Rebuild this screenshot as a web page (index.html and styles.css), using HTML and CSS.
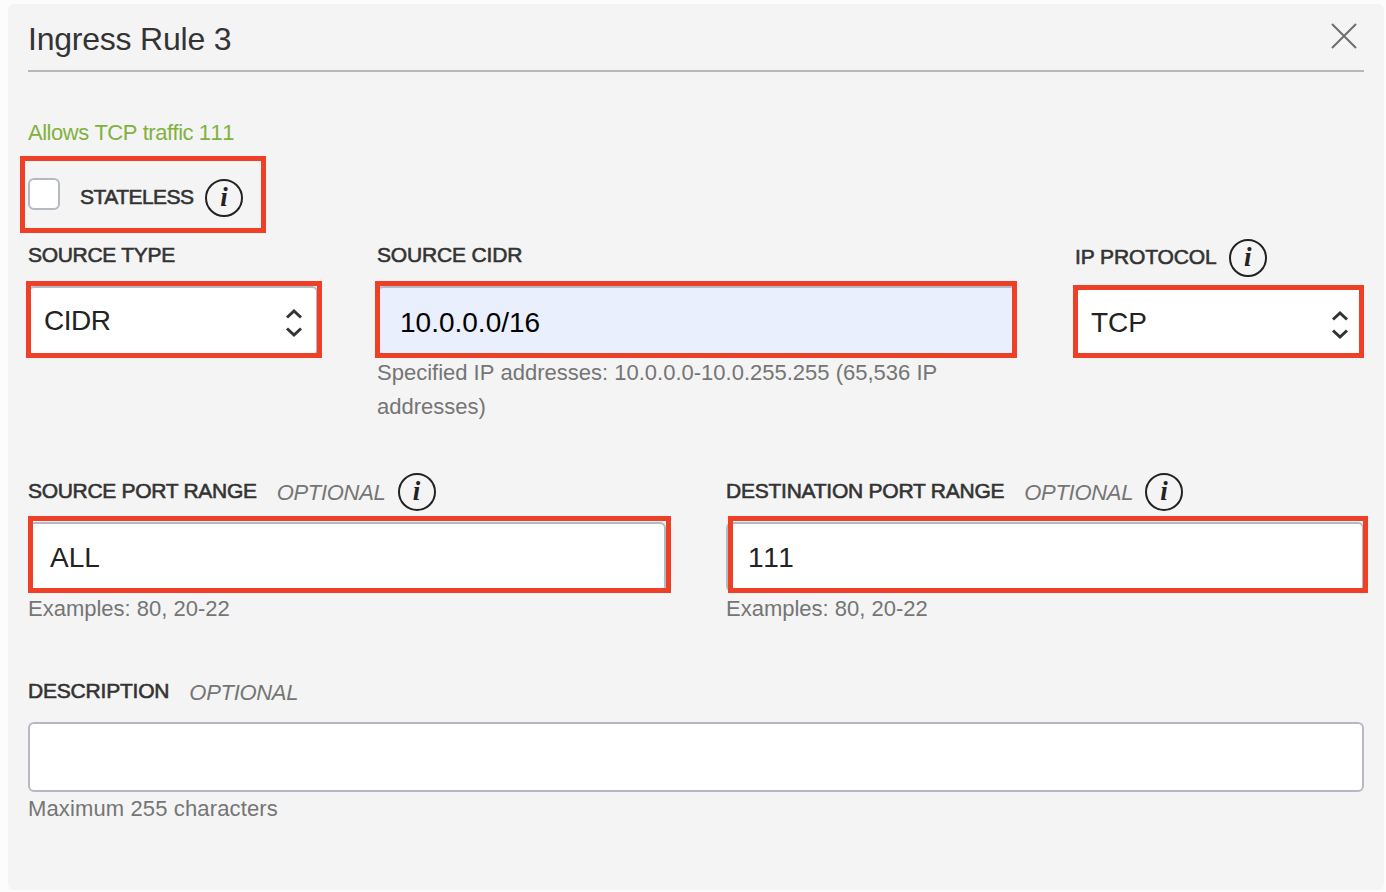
FILE: index.html
```html
<!DOCTYPE html>
<html lang="en">
<head>
<meta charset="utf-8">
<title>Ingress Rule 3</title>
<link rel="stylesheet" href="styles.css">
</head>
<body>
<main class="panel">
  <header class="panel-header">
    <h1 class="title">Ingress Rule 3</h1>
    <svg class="close" width="28" height="28" viewBox="0 0 28 28"><path d="M2 2L26 26M26 2L2 26"/></svg>
  </header>
  <p class="summary">Allows TCP traffic 111</p>
  <div class="stateless">
    <span class="checkbox"></span>
    <span class="label stateless-label">STATELESS</span>
    <span class="info">i</span>
    <span class="mark mark-stateless"></span>
  </div>
  <div class="row row-source">
    <section class="field">
      <div class="label-row"><span class="label l-type">SOURCE TYPE</span></div>
      <div class="control select type">
        <span class="value v-type">CIDR</span>
        <svg class="arrows" width="18" height="30" viewBox="0 0 18 30"><path d="M2 9.5L9 3L16 9.5M2 20.5L9 27L16 20.5"/></svg>
        <span class="mark mark-type"></span>
      </div>
    </section>
    <section class="field">
      <div class="label-row"><span class="label l-cidr">SOURCE CIDR</span></div>
      <div class="control cidr">
        <span class="value">10.0.0.0/16</span>
        <span class="mark mark-cidr"></span>
      </div>
      <p class="hint">Specified IP addresses: 10.0.0.0-10.0.255.255 (65,536 IP<br>addresses)</p>
    </section>
    <section class="field">
      <div class="label-row protocol-row"><span class="label l-proto">IP PROTOCOL</span><span class="info">i</span></div>
      <div class="control select protocol">
        <span class="value">TCP</span>
        <svg class="arrows" width="18" height="30" viewBox="0 0 18 30"><path d="M2 9.5L9 3L16 9.5M2 20.5L9 27L16 20.5"/></svg>
        <span class="mark mark-protocol"></span>
      </div>
    </section>
  </div>
  <div class="row row-ports">
    <section class="field">
      <div class="label-row"><span class="label l-sport">SOURCE PORT RANGE</span><em class="optional">OPTIONAL</em><span class="info">i</span></div>
      <div class="control port">
        <span class="value">ALL</span>
        <span class="mark mark-sport"></span>
      </div>
      <p class="hint">Examples: 80, 20-22</p>
    </section>
    <section class="field">
      <div class="label-row"><span class="label l-dport">DESTINATION PORT RANGE</span><em class="optional">OPTIONAL</em><span class="info">i</span></div>
      <div class="control port">
        <span class="value v-dport">111</span>
        <span class="mark mark-dport"></span>
      </div>
      <p class="hint">Examples: 80, 20-22</p>
    </section>
  </div>
  <section class="field description">
    <div class="label-row"><span class="label l-desc">DESCRIPTION</span><em class="optional">OPTIONAL</em></div>
    <div class="control"></div>
    <p class="hint h-max">Maximum 255 characters</p>
  </section>
</main>
</body>
</html>
```
FILE: styles.css
```css
* { box-sizing: border-box; }
body {
  margin: 0;
  padding: 4px 2px 2px 8px;
  height: 892px;
  background: #fcfcfc;
  font-family: "Liberation Sans", Arial, sans-serif;
  font-size: 22px;
  color: #333;
  font-kerning: none;
  overflow: hidden;
}
.panel {
  height: 886px;
  padding: 0 20px;
  background: #f4f4f4;
  border-radius: 6px;
}
.panel-header {
  display: flex;
  justify-content: space-between;
  height: 68px;
  border-bottom: 2px solid #b5b9be;
}
.title {
  margin: 15px 0 0;
  font-size: 32px;
  line-height: 40px;
  font-weight: 400;
  letter-spacing: -0.22px;
  white-space: nowrap;
}
.close { margin: 18px 6px 0 0; }
.close path { fill: none; stroke: #6e6e6e; stroke-width: 2; }
.summary {
  margin: 46px 0 0;
  line-height: 30px;
  color: #82b13d;
  letter-spacing: -0.47px;
}
.stateless {
  position: relative;
  display: flex;
  align-items: flex-start;
  width: 237px;
  height: 38px;
  margin-top: 30px;
}
.checkbox {
  width: 32px;
  height: 32px;
  border: 2px solid #b5bac2;
  border-radius: 6px;
  background: #fff;
}
.label {
  font-size: 21px;
  line-height: 38px;
  font-kerning: normal;
  -webkit-text-stroke: 0.6px #333;
  white-space: nowrap;
}
.stateless-label { margin-left: 20px; width: 125px; letter-spacing: -0.52px; }
.l-type { letter-spacing: -0.3px; }
.l-cidr { letter-spacing: -0.17px; }
.l-proto { letter-spacing: -0.1px; }
.l-sport { letter-spacing: -0.3px; }
.l-dport { letter-spacing: -0.24px; }
.l-desc { letter-spacing: -0.2px; }
.info {
  width: 38px;
  height: 38px;
  border: 2px solid #222;
  border-radius: 50%;
  font: italic bold 27px/33px "Liberation Serif", serif;
  color: #222;
  text-align: center;
}
.stateless .info { margin-top: 1px; }
.row { display: grid; }
.row-source {
  grid-template-columns: 290px 639px 289px;
  column-gap: 59px;
  height: 236px;
  margin-top: 20px;
}
.label-row { display: flex; height: 50px; }
.control {
  position: relative;
  display: flex;
  align-items: center;
  height: 70px;
  border: 2px solid #b5bac2;
  border-radius: 6px;
  background: #fff;
  font-size: 28px;
  color: #222;
}
.select { justify-content: space-between; padding: 0 13px 0 14px; }
.v-type { letter-spacing: -0.5px; }
.cidr { padding: 3px 21px 0; background: #e9effd; color: #000; }
.port { padding: 2px 20px 0; }
.v-dport { letter-spacing: -0.4px; }
.arrows { margin-top: 4px; }
.arrows path { fill: none; stroke: #333; stroke-width: 3; }
.mark {
  position: absolute;
  border: 5px solid #ee4027;
  pointer-events: none;
}
.mark-stateless { left: -8px; top: -22px; width: 246px; height: 77px; }
.mark-type { left: -4px; top: -7px; width: 296px; height: 77px; }
.mark-cidr { left: -4px; top: -7px; width: 642px; height: 77px; }
.mark-protocol { left: -4px; top: -5px; width: 291px; height: 73px; }
.mark-sport { left: -2px; top: -8px; width: 643px; height: 77px; }
.mark-dport { left: 0; top: -8px; width: 640px; height: 77px; }
.hint { margin: 0; line-height: 34px; color: #757575; white-space: nowrap; }
.h-max { letter-spacing: 0.13px; }
.protocol-row { height: 52px; padding-top: 3px; }
.protocol-row .label { line-height: 36px; }
.protocol-row .info { margin-left: 12px; }
.protocol { height: 68px; padding-top: 2px; }
.optional { margin-left: 20px; line-height: 41px; color: #757575; letter-spacing: -0.3px; }
.optional + .info { margin: 1px 0 0 12px; }
.row-ports { grid-template-columns: 638px 638px; column-gap: 60px; height: 200px; }
```
